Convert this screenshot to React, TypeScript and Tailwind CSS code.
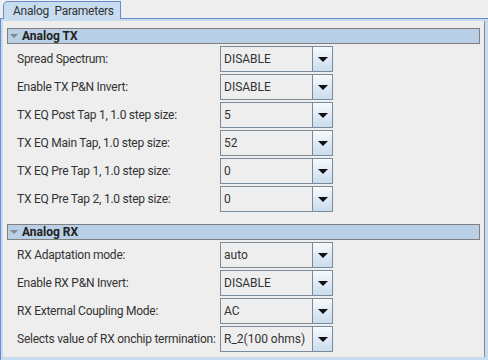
import React from 'react';

interface Field {
  label: string;
  value: string;
}

const txFields: Field[] = [
  { label: 'Spread Spectrum:', value: 'DISABLE' },
  { label: 'Enable TX P&N Invert:', value: 'DISABLE' },
  { label: 'TX EQ Post Tap 1, 1.0 step size:', value: '5' },
  { label: 'TX EQ Main Tap, 1.0 step size:', value: '52' },
  { label: 'TX EQ Pre Tap 1, 1.0 step size:', value: '0' },
  { label: 'TX EQ Pre Tap 2, 1.0 step size:', value: '0' },
];

const rxFields: Field[] = [
  { label: 'RX Adaptation mode:', value: 'auto' },
  { label: 'Enable RX P&N Invert:', value: 'DISABLE' },
  { label: 'RX External Coupling Mode:', value: 'AC' },
  { label: 'Selects value of RX onchip termination:', value: 'R_2(100 ohms)' },
];

function SectionHeader({ title }: { title: string }) {
  return (
    <div className="flex items-center h-[16px] mx-[4px] border border-[#7f7f7f] bg-[#b8cfe5]">
      <svg width="8" height="5" viewBox="0 0 8 5" className="ml-[2px] mr-[4px]">
        <polygon points="0,0 8,0 4,4" fill="#7f8a96" />
      </svg>
      <span className="text-[12px] font-bold text-[#222] leading-none">{title}</span>
    </div>
  );
}

function Combo({ value }: { value: string }) {
  return (
    <div className="flex h-[26px] w-[113px]">
      <div className="flex-1 flex items-center border border-[#7a8a99] bg-[#eeeeee] pl-[3px] text-[12px] text-[#333]">
        {value}
      </div>
      <div className="w-[20px] flex items-center justify-center border border-l-0 border-[#7a8a99] bg-gradient-to-b from-[#f7fafd] to-[#c9dbee]">
        <svg width="10" height="5" viewBox="0 0 10 5">
          <polygon points="0,0 10,0 5,5" fill="#111" />
        </svg>
      </div>
    </div>
  );
}

function FieldRow({ field }: { field: Field }) {
  return (
    <div className="flex items-center h-[26px]">
      <div className="w-[217px] pl-[14px] text-[12px] tracking-[-0.25px] text-[#333] whitespace-nowrap">
        {field.label}
      </div>
      <Combo value={field.value} />
    </div>
  );
}

export default function App() {
  return (
    <div
      className="w-[488px] h-[360px] bg-[#eeeeee] overflow-hidden flex flex-col"
      style={{ fontFamily: 'Roboto, "Liberation Sans", sans-serif' }}
    >
      {/* tab strip */}
      <div className="flex h-[19px] shrink-0">
        <div className="w-[3px] border-b border-[#6a8bd0]" />
        <div className="w-[118px] mt-[1px] border border-b-0 border-[#6a8bd0] rounded-tl-[5px] bg-[#c8dcf0] flex items-center pl-[9px] text-[12px] tracking-[-0.25px] text-[#333] whitespace-pre">
          Analog  Parameters
        </div>
        <div className="flex-1 border-b border-[#6a8bd0]" />
      </div>

      {/* tab content */}
      <div className="flex-1 border-l border-[#6a8bd0] border-r-[3px] border-r-[#c8dcf0] bg-[#c8dcf0] pt-[2px] pl-[2px] pb-[3px] flex">
        <div className="flex-1 bg-[#eeeeee] border-r border-[#7a8a99] pt-[7px] flex flex-col">
          <SectionHeader title="Analog TX" />
          <div className="flex flex-col gap-[2px] mt-[2px]">
            {txFields.map((f) => (
              <FieldRow key={f.label} field={f} />
            ))}
          </div>
          <div className="mt-[12px]">
            <SectionHeader title="Analog RX" />
          </div>
          <div className="flex flex-col gap-[2px] mt-[2px]">
            {rxFields.map((f) => (
              <FieldRow key={f.label} field={f} />
            ))}
          </div>
        </div>
      </div>
    </div>
  );
}
